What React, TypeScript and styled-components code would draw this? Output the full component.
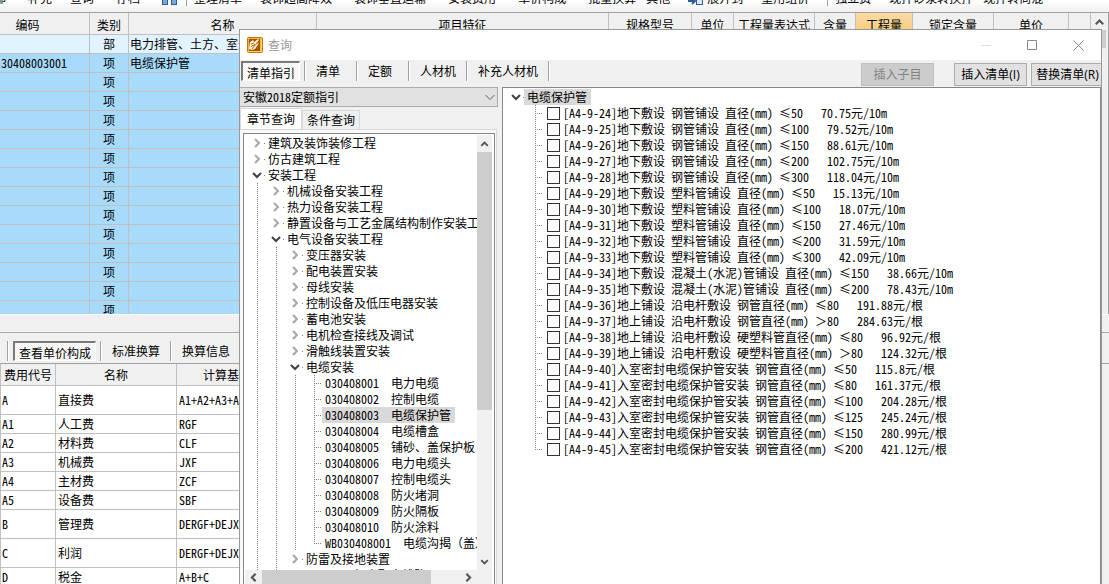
import React from 'react';
import styled, { createGlobalStyle, css } from 'styled-components';

const Global = createGlobalStyle`
  * { box-sizing: border-box; }
  body {
    margin: 0;
    overflow: hidden;
    background: #f0f0f0;
    color: #000;
    font: 12px/16px "Noto Sans Mono CJK SC", "Noto Sans CJK SC", monospace;
  }
  button, select, input { font: inherit; color: inherit; margin: 0; }
`;

const LINE = '#c0c0c0';
const dotsDown = 'repeating-linear-gradient(to bottom, #808080 0 1px, transparent 1px 2px)';
const dotsAcross = 'repeating-linear-gradient(to right, #808080 0 1px, transparent 1px 2px)';

/* ---------- main window ---------- */

const Page = styled.main`
  position: relative;
  display: flex;
  flex-direction: column;
  height: 100vh;
  overflow: hidden;
`;

const Toolbar = styled.div`
  display: flex;
  flex: none;
  align-items: flex-end;
  height: 13px;
  margin-left: -6px;
  padding-bottom: 6px;
  overflow: hidden;
  white-space: nowrap;
  background: linear-gradient(#fff, #f0f0f0);
  border-bottom: 1px solid #a0a0a0;
`;

const ToolButton = styled.button<{ $gap?: number }>`
  flex: none;
  padding: 0;
  border: 0;
  background: none;
  line-height: 16px;
  margin-right: ${p => p.$gap ?? 22}px;
`;

const ToolIcon = styled.svg<{ $gap: number }>`
  display: block;
  flex: none;
  margin-right: ${p => p.$gap}px;
`;

const ToolDivider = styled.span`
  flex: none;
  width: 1px;
  height: 14px;
  margin-right: 7px;
  background: #a0a0a0;
`;

const UpperPane = styled.section`
  display: flex;
  flex: none;
  height: 301px;
  overflow: hidden;
`;

const UpperGrid = styled.div`
  flex: 1;
  min-width: 0;
`;

const DataTable = styled.table`
  width: 100%;
  table-layout: fixed;
  border-collapse: separate;
  border-spacing: 0;
  white-space: nowrap;

  th, td {
    overflow: hidden;
    padding: 0 2px;
    border-right: 1px solid ${LINE};
    border-bottom: 1px solid ${LINE};
    font-weight: normal;
    text-align: left;
  }
  th {
    background: #f0f0f0;
    text-align: center;
  }
`;

const HeadRow = styled.tr<{ $low?: boolean }>`
  height: 22px;

  && th { padding-top: ${p => (p.$low ? 2 : 0)}px; }
`;

const HeadCell = styled.th<{ $active?: boolean; $shift?: boolean }>`
  ${p => p.$shift && css`&& { padding-right: 36px; }`}
  ${p => p.$active && css`&& { background: linear-gradient(#fbdba4, #f5c97a); }`}
`;

const ItemRow = styled.tr<{ $section?: boolean }>`
  height: 19px;
  background: ${p => (p.$section ? '#e1f3ff' : '#a8dbfb')};

  && td { padding: 0 1px; }
  && td:nth-child(2) { text-align: center; }
`;

const PageScroll = styled.div`
  display: flex;
  flex: none;
  flex-direction: column;
  width: 18px;
  background: #f0f0f0;
  border-right: 1px solid #a0a0a0;
`;

const PageThumb = styled.div`
  width: 15px;
  height: 18px;
  background: #cdcdcd;
`;

const Splitter = styled.div`
  flex: none;
  height: 19px;
  border-top: 1px solid #fff;
  border-bottom: 1px solid #a8a8b0;
`;

const TabStrip = styled.nav`
  display: flex;
  flex: none;
  align-items: center;
  height: 31px;
  padding: 5px 0 0 7px;
  border-bottom: 1px solid #a0a0a0;
`;

const LowerPane = styled.section`
  flex: 1;
  min-height: 0;
  margin-right: 9px;
  overflow: hidden;
  background: #fff;
  border-left: 1px solid ${LINE};
`;

const FeeRow = styled.tr<{ $tall?: boolean }>`
  height: ${p => (p.$tall ? 29 : 19)}px;
  background: #fff;

  && td:first-child { padding: 0 1px; }
`;

const TabDivider = styled.span`
  flex: none;
  width: 2px;
  height: 20px;
  background: #a0a0a0;
  border-right: 1px solid #fff;
`;

const WideDivider = styled(TabDivider)`
  margin-left: 6px;
`;

const FlatTab = styled.button<{ $pressed?: boolean }>`
  flex: none;
  height: 20px;
  padding: 0 10px;
  border: 0;
  background: none;
  line-height: 16px;

  ${p => p.$pressed && css`
    padding: 2px 4px 0 4px;
    margin: 0 4px 0 1px;
    line-height: 15px;
    border: solid;
    border-width: 2px 1px 1px 2px;
    border-color: #7a7a7a #fff #fff #7a7a7a;
    background: repeating-conic-gradient(#fff 0 25%, #f0f0f0 0 50%) 0 0 / 2px 2px;
  `}
`;

const PressedGap = styled.span`
  flex: none;
  width: 3px;
`;

/* ---------- query dialog ---------- */

const Dialog = styled.section`
  position: absolute;
  inset: 29px 7px -5px 239px;
  display: flex;
  flex-direction: column;
  overflow: hidden;
  background: #f0f0f0;
  border: 1px solid #999;
`;

const TitleBar = styled.header`
  display: flex;
  flex: none;
  align-items: center;
  height: 30px;
  padding-left: 7px;
  background: #fff;
  color: #999;
`;

const Title = styled.h1`
  flex: 1;
  margin: 0 0 0 5px;
  font: inherit;
`;

const WindowButton = styled.button`
  display: flex;
  align-items: center;
  justify-content: center;
  width: 46px;
  height: 30px;
  padding: 0;
  border: 0;
  background: none;
`;

const DialogBar = styled.div`
  display: flex;
  flex: none;
  align-items: flex-start;
  height: 27px;
`;

const Spacer = styled.div`
  flex: 1;
`;

const DialogTabs = styled.nav`
  display: flex;
  align-items: center;
  padding-top: 1px;
`;

const PushButton = styled.button<{ $gap?: number }>`
  flex: none;
  width: 73px;
  height: 23px;
  margin: 3px ${p => p.$gap ?? 0}px 0 0;
  padding: 0;
  border: 1px solid #adadad;
  background: #e1e1e1;
  font-family: "Open Sans", "Noto Sans CJK SC", sans-serif;
  white-space: nowrap;

  &:disabled {
    border-color: #bfbfbf;
    background: #ccc;
    color: #838383;
  }
`;

const DialogBody = styled.div`
  display: flex;
  flex: 1;
  min-height: 0;
`;

const GuidePane = styled.div`
  display: flex;
  flex: none;
  flex-direction: column;
  width: 258px;
  margin-right: 4px;
`;

const ComboBox = styled.label`
  position: relative;
  display: block;
  flex: none;
  margin-left: -1px;
`;

const Combo = styled.select`
  display: block;
  width: 100%;
  height: 20px;
  padding: 0 3px;
  appearance: none;
  border: 1px solid #adadad;
  border-radius: 0;
  background: #e1e1e1;
`;

const ComboArrow = styled.svg`
  position: absolute;
  top: 7px;
  right: 3px;
  pointer-events: none;
`;

const PageTabs = styled.div`
  display: flex;
  flex: none;
  align-items: flex-end;
  height: 22px;
`;

const PageTab = styled.button<{ $selected?: boolean }>`
  flex: none;
  height: ${p => (p.$selected ? 21 : 19)}px;
  padding: 0 ${p => (p.$selected ? 6 : 4)}px;
  border: 1px solid #d9d9d9;
  border-bottom: 0;
  background: ${p => (p.$selected ? '#fff' : '#f0f0f0')};
  line-height: 18px;
`;

const PagePanel = styled.div`
  display: flex;
  flex: 1;
  min-height: 0;
  margin-right: 1px;
  padding: 3px 1px 0 3px;
  border: solid #d9d9d9;
  border-width: 1px 1px 0 0;
  background: #f9f9f9;
`;

const TreeFrame = styled.div`
  display: flex;
  flex: 1;
  flex-direction: column;
  min-width: 0;
  padding-right: 2px;
  border: 1px solid #828790;
  background: #fff;
`;

const TreeView = styled.div`
  display: flex;
  flex: 1;
  min-height: 0;
`;

const Tree = styled.ul`
  flex: 1;
  min-width: 0;
  margin: 0;
  padding: 1px 0 0 2px;
  overflow: hidden;
  list-style: none;
`;

const TreeRow = styled.li`
  display: flex;
  height: 16px;
  white-space: pre;
`;

const Guide = styled.span`
  flex: none;
  width: 19px;
  background: ${dotsDown} 11px 0 / 1px 100% no-repeat;
`;

const Elbow = styled.span<{ $last?: boolean }>`
  flex: none;
  width: 19px;
  background:
    ${dotsDown} 11px 0 / 1px ${p => (p.$last ? '50%' : '100%')} no-repeat,
    ${dotsAcross} 11px 8px / 8px 1px no-repeat;
`;

const BlankCell = styled.span`
  flex: none;
  width: 19px;
`;

const Chevron = styled.svg`
  display: block;
  flex: none;
`;

const NodeLabel = styled.span<{ $selected?: boolean }>`
  flex: none;
  padding: 0 4px 0 3px;
  background: ${p => (p.$selected ? '#d9d9d9' : 'none')};
`;

const CheckLabel = styled.label`
  display: flex;
  align-items: center;
  gap: 3px;
  padding-left: 4px;
`;

const Check = styled.input`
  width: 13px;
  height: 13px;
  appearance: none;
  border: 1px solid #333;
  background: #fff;
`;

const VScroll = styled.div`
  display: flex;
  flex: none;
  flex-direction: column;
  width: 15px;
  margin-top: 1px;
  background: #f0f0f0;
`;

const VThumb = styled.div`
  flex: 0 1 258px;
  margin-bottom: auto;
  background: #cdcdcd;
`;

const HScroll = styled.div`
  display: flex;
  flex: none;
  align-items: center;
  height: 17px;
  margin-left: 1px;
  padding-bottom: 2px;
  background: #f0f0f0;
`;

const HThumb = styled.div`
  flex: 0 1 169px;
  align-self: stretch;
  margin-bottom: -2px;
  margin-right: auto;
  background: #cdcdcd;
`;

const HCorner = styled.span`
  flex: none;
  width: 15px;
`;

const ResultFrame = styled.div`
  flex: 1;
  min-width: 0;
  border: 1px solid #828790;
  background: #fff;
`;

const ARROWS = {
  up: 'M4.5 10.5 8 7l3.5 3.5',
  down: 'M4.5 6.5 8 10l3.5-3.5',
  left: 'M10 4.5 6.5 8l3.5 3.5',
  right: 'M6 4.5 9.5 8 6 11.5',
};

function Arrow({ dir, width = 17 }: { dir: keyof typeof ARROWS; width?: number }) {
  return (
    <Chevron width={width} height="17" viewBox="0 0 16 16" aria-hidden="true">
      <path d={ARROWS[dir]} fill="none" stroke="#555" strokeWidth="2" />
    </Chevron>
  );
}

function Toggle({ open }: { open?: boolean }) {
  return (
    <Chevron width="19" height="16" viewBox="0 0 19 16" aria-hidden="true">
      {open
        ? <path d="M7 6l4 4 4-4" fill="none" stroke="#404040" strokeWidth="2" />
        : <path d="M9 4l4 4-4 4" fill="none" stroke="#a6a6a6" strokeWidth="2" />}
      <rect x="18" y="8" width="1" height="1" fill="#808080" />
    </Chevron>
  );
}

type Node = { level: number; text: string; open?: boolean; leaf?: boolean; last?: boolean; selected?: boolean };

const leaf = (code: string, name: string, extra: Partial<Node> = {}): Node =>
  ({ level: 3, text: `${code}  ${name}`, leaf: true, ...extra });

const NODES: Node[] = [
  { level: 0, text: '建筑及装饰装修工程' },
  { level: 0, text: '仿古建筑工程' },
  { level: 0, text: '安装工程', open: true },
  { level: 1, text: '机械设备安装工程' },
  { level: 1, text: '热力设备安装工程' },
  { level: 1, text: '静置设备与工艺金属结构制作安装工程' },
  { level: 1, text: '电气设备安装工程', open: true },
  { level: 2, text: '变压器安装' },
  { level: 2, text: '配电装置安装' },
  { level: 2, text: '母线安装' },
  { level: 2, text: '控制设备及低压电器安装' },
  { level: 2, text: '蓄电池安装' },
  { level: 2, text: '电机检查接线及调试' },
  { level: 2, text: '滑触线装置安装' },
  { level: 2, text: '电缆安装', open: true },
  leaf('030408001', '电力电缆'),
  leaf('030408002', '控制电缆'),
  leaf('030408003', '电缆保护管', { selected: true }),
  leaf('030408004', '电缆槽盒'),
  leaf('030408005', '铺砂、盖保护板'),
  leaf('030408006', '电力电缆头'),
  leaf('030408007', '控制电缆头'),
  leaf('030408008', '防火堵洞'),
  leaf('030408009', '防火隔板'),
  leaf('030408010', '防火涂料'),
  leaf('WB030408001', '电缆沟揭（盖）', { last: true }),
  { level: 2, text: '防雷及接地装置' },
  { level: 2, text: '10kV以下架空配电线路' },
];

const underground = '地下敷设 ';
const pole = '地上铺设 沿电杆敷设 ';
const sealed = '入室密封电缆保护管安装 钢管直径(mm) ';

const RESULTS = [
  underground + '钢管铺设 直径(mm) ≤50   70.75元/10m',
  underground + '钢管铺设 直径(mm) ≤100   79.52元/10m',
  underground + '钢管铺设 直径(mm) ≤150   88.61元/10m',
  underground + '钢管铺设 直径(mm) ≤200   102.75元/10m',
  underground + '钢管铺设 直径(mm) ≤300   118.04元/10m',
  underground + '塑料管铺设 直径(mm) ≤50   15.13元/10m',
  underground + '塑料管铺设 直径(mm) ≤100   18.07元/10m',
  underground + '塑料管铺设 直径(mm) ≤150   27.46元/10m',
  underground + '塑料管铺设 直径(mm) ≤200   31.59元/10m',
  underground + '塑料管铺设 直径(mm) ≤300   42.09元/10m',
  underground + '混凝土(水泥)管铺设 直径(mm) ≤150   38.66元/10m',
  underground + '混凝土(水泥)管铺设 直径(mm) ≤200   78.43元/10m',
  pole + '钢管直径(mm) ≤80   191.88元/根',
  pole + '钢管直径(mm) ＞80   284.63元/根',
  pole + '硬塑料管直径(mm) ≤80   96.92元/根',
  pole + '硬塑料管直径(mm) ＞80   124.32元/根',
  sealed + '≤50   115.8元/根',
  sealed + '≤80   161.37元/根',
  sealed + '≤100   204.28元/根',
  sealed + '≤125   245.24元/根',
  sealed + '≤150   280.99元/根',
  sealed + '≤200   421.12元/根',
];

const COLUMNS: [string, number | undefined][] = [
  ['编码', 90], ['类别', 39], ['名称', 188], ['项目特征', undefined], ['规格型号', 83], ['单位', 42],
  ['工程量表达式', 81], ['含量', 41], ['工程量', 57], ['锁定含量', 81], ['单价', 75], ['', 22],
];

const ITEMS: [string, string, string][] = [
  ['', '部', '电力排管、土方、室外'],
  ['30408003001', '项', '电缆保护管'],
  ...Array.from({ length: 13 }, (): [string, string, string] => ['', '项', '']),
];

const FEES: [string, string, string, boolean?][] = [
  ['A', '直接费', 'A1+A2+A3+A4+A5', true],
  ['A1', '人工费', 'RGF'],
  ['A2', '材料费', 'CLF'],
  ['A3', '机械费', 'JXF'],
  ['A4', '主材费', 'ZCF'],
  ['A5', '设备费', 'SBF'],
  ['B', '管理费', 'DERGF+DEJXF', true],
  ['C', '利润', 'DERGF+DEJXF', true],
  ['D', '税金', 'A+B+C'],
];

function MainToolbar() {
  return (
    <Toolbar>
      <ToolButton>部</ToolButton>
      <ToolButton $gap={18}>补充</ToolButton>
      <ToolButton>查询</ToolButton>
      <ToolButton>存档</ToolButton>
      <ToolIcon $gap={8} width="16" height="14" viewBox="0 0 16 14" aria-hidden="true">
        <rect x="0.500" y="2.500" width="5" height="10" fill="#7ea6dc" stroke="#2f5b9c" />
        <rect x="9.500" y="2.500" width="5" height="10" fill="#7ea6dc" stroke="#2f5b9c" />
      </ToolIcon>
      <ToolDivider />
      <ToolButton $gap={18}>整理清单</ToolButton>
      <ToolButton>装饰超高降效</ToolButton>
      <ToolButton>装饰垂直运输</ToolButton>
      <ToolButton>安装费用</ToolButton>
      <ToolButton>单价构成</ToolButton>
      <ToolButton $gap={10}>批量换算</ToolButton>
      <ToolButton $gap={18}>其他</ToolButton>
      <ToolIcon $gap={4} width="15" height="14" viewBox="0 0 15 14" aria-hidden="true">
        <path d="M0 9h7M4 6l3 3-3 3" fill="none" stroke="#2f5b9c" strokeWidth="2" />
        <rect x="8.500" y="6.500" width="6" height="6" fill="#dfe9f7" stroke="#2f5b9c" />
      </ToolIcon>
      <ToolButton $gap={18}>展开到</ToolButton>
      <ToolButton $gap={18}>重用组价</ToolButton>
      <ToolDivider />
      <ToolButton $gap={18}>独立费</ToolButton>
      <ToolButton $gap={10}>现拌砂浆转换拌</ToolButton>
      <ToolButton>现拌转商混</ToolButton>
    </Toolbar>
  );
}

function QueryDialog() {
  return (
    <Dialog role="dialog" aria-labelledby="query-title">
      <TitleBar>
        <svg width="16" height="16" viewBox="0 0 16 16" aria-hidden="true">
          <rect x="0.500" y="0.500" width="15" height="15" rx="1" fill="#f7b733" stroke="#c8741a" />
          <rect x="2" y="2" width="11" height="12" fill="#a8520c" />
          <path d="M3 5l3-2 1 2 4-3 1 1-3 4 3-1-4 6-3 1-3-1z" fill="#fff6da" />
          <path d="M4 7l3-1M4 9.500l4-2M5 12l5-6" stroke="#b8600c" strokeWidth="1" />
          <path d="M1.500 14.500h13V2" fill="none" stroke="#ffd84a" strokeWidth="1" />
        </svg>
        <Title id="query-title">查询</Title>
        <WindowButton aria-label="最小化">
          <svg width="11" height="11" aria-hidden="true"><path d="M0 5.500h10" stroke="#dcdcdc" /></svg>
        </WindowButton>
        <WindowButton aria-label="最大化">
          <svg width="11" height="11" aria-hidden="true"><path d="M.5.5h9v9h-9z" fill="none" stroke="#8a8a8a" /></svg>
        </WindowButton>
        <WindowButton aria-label="关闭">
          <svg width="11" height="11" aria-hidden="true"><path d="M.5.5l10 10M10.500.5l-10 10" stroke="#8a8a8a" /></svg>
        </WindowButton>
      </TitleBar>

      <DialogBar>
        <DialogTabs>
          <FlatTab $pressed>清单指引</FlatTab>
          <TabDivider />
          <FlatTab>清单</FlatTab>
          <WideDivider />
          <FlatTab>定额</FlatTab>
          <WideDivider />
          <FlatTab>人材机</FlatTab>
          <TabDivider />
          <FlatTab>补充人材机</FlatTab>
          <TabDivider />
        </DialogTabs>
        <Spacer />
        <PushButton $gap={20} disabled>插入子目</PushButton>
        <PushButton $gap={4}>插入清单(I)</PushButton>
        <PushButton $gap={-3}>替换清单(R)</PushButton>
      </DialogBar>

      <DialogBody>
        <GuidePane>
          <ComboBox>
            <Combo aria-label="定额指引" defaultValue="ah2018">
              <option value="ah2018">安徽2018定额指引</option>
            </Combo>
            <ComboArrow width="10" height="7" aria-hidden="true">
              <path d="M.5 1l4.500 4.500L9.500 1" fill="none" stroke="#606060" />
            </ComboArrow>
          </ComboBox>
          <PageTabs role="tablist">
            <PageTab role="tab" aria-selected $selected>章节查询</PageTab>
            <PageTab role="tab" aria-selected={false}>条件查询</PageTab>
          </PageTabs>
          <PagePanel>
            <TreeFrame>
              <TreeView>
                <Tree>
                  {NODES.map(n => (
                    <TreeRow key={n.text}>
                      {Array.from({ length: n.level }, (_, i) => <Guide key={i} />)}
                      {n.leaf ? <Elbow $last={n.last} /> : <Toggle open={n.open} />}
                      <NodeLabel $selected={n.selected}>{n.text}</NodeLabel>
                    </TreeRow>
                  ))}
                </Tree>
                <VScroll>
                  <Arrow dir="up" width={15} />
                  <VThumb />
                  <Arrow dir="down" width={15} />
                </VScroll>
              </TreeView>
              <HScroll>
                <Arrow dir="left" />
                <HThumb />
                <Arrow dir="right" />
                <HCorner />
              </HScroll>
            </TreeFrame>
          </PagePanel>
        </GuidePane>

        <ResultFrame>
          <Tree>
            <TreeRow>
              <Toggle open />
              <NodeLabel $selected>电缆保护管</NodeLabel>
            </TreeRow>
            {RESULTS.map((text, i) => (
              <TreeRow key={i}>
                <BlankCell />
                <Elbow $last={i === RESULTS.length - 1} />
                <CheckLabel>
                  <Check type="checkbox" />
                  {`[A4-9-${24 + i}]${text}`}
                </CheckLabel>
              </TreeRow>
            ))}
          </Tree>
        </ResultFrame>
      </DialogBody>
    </Dialog>
  );
}

export default function App() {
  return (
    <Page>
      <Global />
      <MainToolbar />
      <UpperPane>
        <UpperGrid>
          <DataTable>
            <colgroup>
              {COLUMNS.map(([, w], i) => <col key={i} style={{ width: w }} />)}
            </colgroup>
            <thead>
              <HeadRow $low>
                {COLUMNS.map(([name], i) => (
                  <HeadCell key={i} $shift={i === 0} $active={name === '工程量'}>{name}</HeadCell>
                ))}
              </HeadRow>
            </thead>
            <tbody>
              {ITEMS.map((cells, i) => (
                <ItemRow key={i} $section={i === 0}>
                  {COLUMNS.map((_, c) => <td key={c}>{cells[c]}</td>)}
                </ItemRow>
              ))}
            </tbody>
          </DataTable>
        </UpperGrid>
        <PageScroll>
          <Arrow dir="up" />
          <PageThumb />
        </PageScroll>
      </UpperPane>
      <Splitter />
      <TabStrip>
        <TabDivider />
        <PressedGap />
        <FlatTab $pressed>查看单价构成</FlatTab>
        <TabDivider />
        <FlatTab>标准换算</FlatTab>
        <TabDivider />
        <FlatTab>换算信息</FlatTab>
      </TabStrip>
      <LowerPane>
        <DataTable>
          <colgroup>
            <col style={{ width: 55 }} />
            <col style={{ width: 121 }} />
            <col style={{ width: 101 }} />
            <col />
          </colgroup>
          <thead>
            <HeadRow>
              <HeadCell>费用代号</HeadCell>
              <HeadCell>名称</HeadCell>
              <HeadCell>计算基数</HeadCell>
              <HeadCell />
            </HeadRow>
          </thead>
          <tbody>
            {FEES.map(([code, name, base, tall]) => (
              <FeeRow key={code} $tall={tall}>
                <td>{code}</td>
                <td>{name}</td>
                <td>{base}</td>
                <td />
              </FeeRow>
            ))}
          </tbody>
        </DataTable>
      </LowerPane>
      <QueryDialog />
    </Page>
  );
}
